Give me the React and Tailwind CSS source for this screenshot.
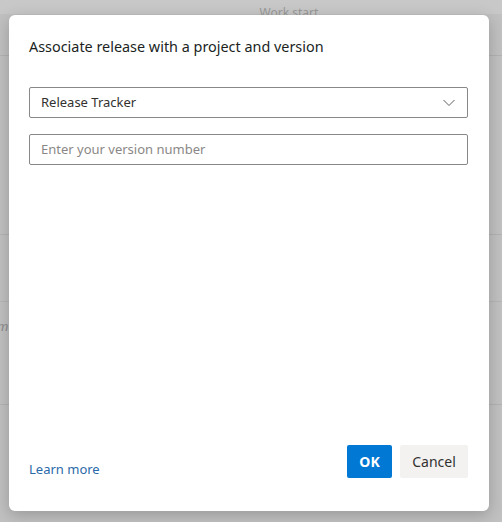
import React from "react";

export default function App() {
  const font = { fontFamily: '"Segoe UI", "Noto Sans", "Open Sans", sans-serif' };
  return (
    <div className="relative w-[502px] h-[522px] bg-[#c1c1c1] overflow-hidden" style={font}>
      {/* faint background page under the overlay */}
      <div className="flex flex-col w-full">
        <div className="h-[14px] bg-[#c8c8c8] flex justify-center">
          <span className="text-[12px] leading-[14px] text-[#9a9a9a] translate-y-[6px] pl-[76px]">Work start</span>
        </div>
        <div className="h-[41px]" />
        <div className="h-px bg-[#b3b3b3]" />
        <div className="h-[178px]" />
        <div className="h-px bg-[#b3b3b3]" />
        <div className="h-[66px]" />
        <div className="h-px bg-[#b6b6b6]" />
        <div className="h-[16px]" />
        <span className="text-[13px] leading-[16px] italic text-[#8a8a8a] -ml-[3px]">m</span>
        <div className="h-[70px]" />
        <div className="h-px bg-[#b3b3b3]" />
      </div>

      <div className="absolute left-[9px] top-[15px] w-[480px] h-[496px] bg-white rounded-[6px] shadow-[0_4px_16px_rgba(0,0,0,0.22)] flex flex-col pl-[20px] pr-[21px] pt-[22px] pb-[33px]">
        <h1 className="text-[14.4px] leading-[20px] text-[#201f1e] font-normal">
          Associate release with a project and version
        </h1>

        <div className="mt-[30px] h-[31px] border border-[#8a8886] rounded-[2px] flex items-center justify-between pl-[11px] pr-[12px]">
          <span className="text-[13px] text-[#323130]">Release Tracker</span>
          <svg width="12" height="8" viewBox="0 0 12 8" fill="none">
            <path d="M0.5 1 L6 6.5 L11.5 1" stroke="#605e5c" strokeWidth="1" />
          </svg>
        </div>

        <div className="mt-[16px] h-[31px] border border-[#8a8886] rounded-[2px] flex items-center pl-[11px]">
          <span className="text-[13px] text-[#8a8886]">Enter your version number</span>
        </div>

        <div className="flex-1" />

        <div className="flex items-end justify-between">
          <a className="text-[13px] text-[#2a6aa8] leading-[20px] -mb-[1px]">Learn more</a>
          <div className="flex gap-[8px]">
            <button className="h-[33px] w-[45px] bg-[#0078d4] text-white text-[14px] font-bold rounded-[2px]">OK</button>
            <button className="h-[33px] w-[68px] bg-[#f3f2f1] text-[#323130] text-[14px] rounded-[2px]">Cancel</button>
          </div>
        </div>
      </div>
    </div>
  );
}
